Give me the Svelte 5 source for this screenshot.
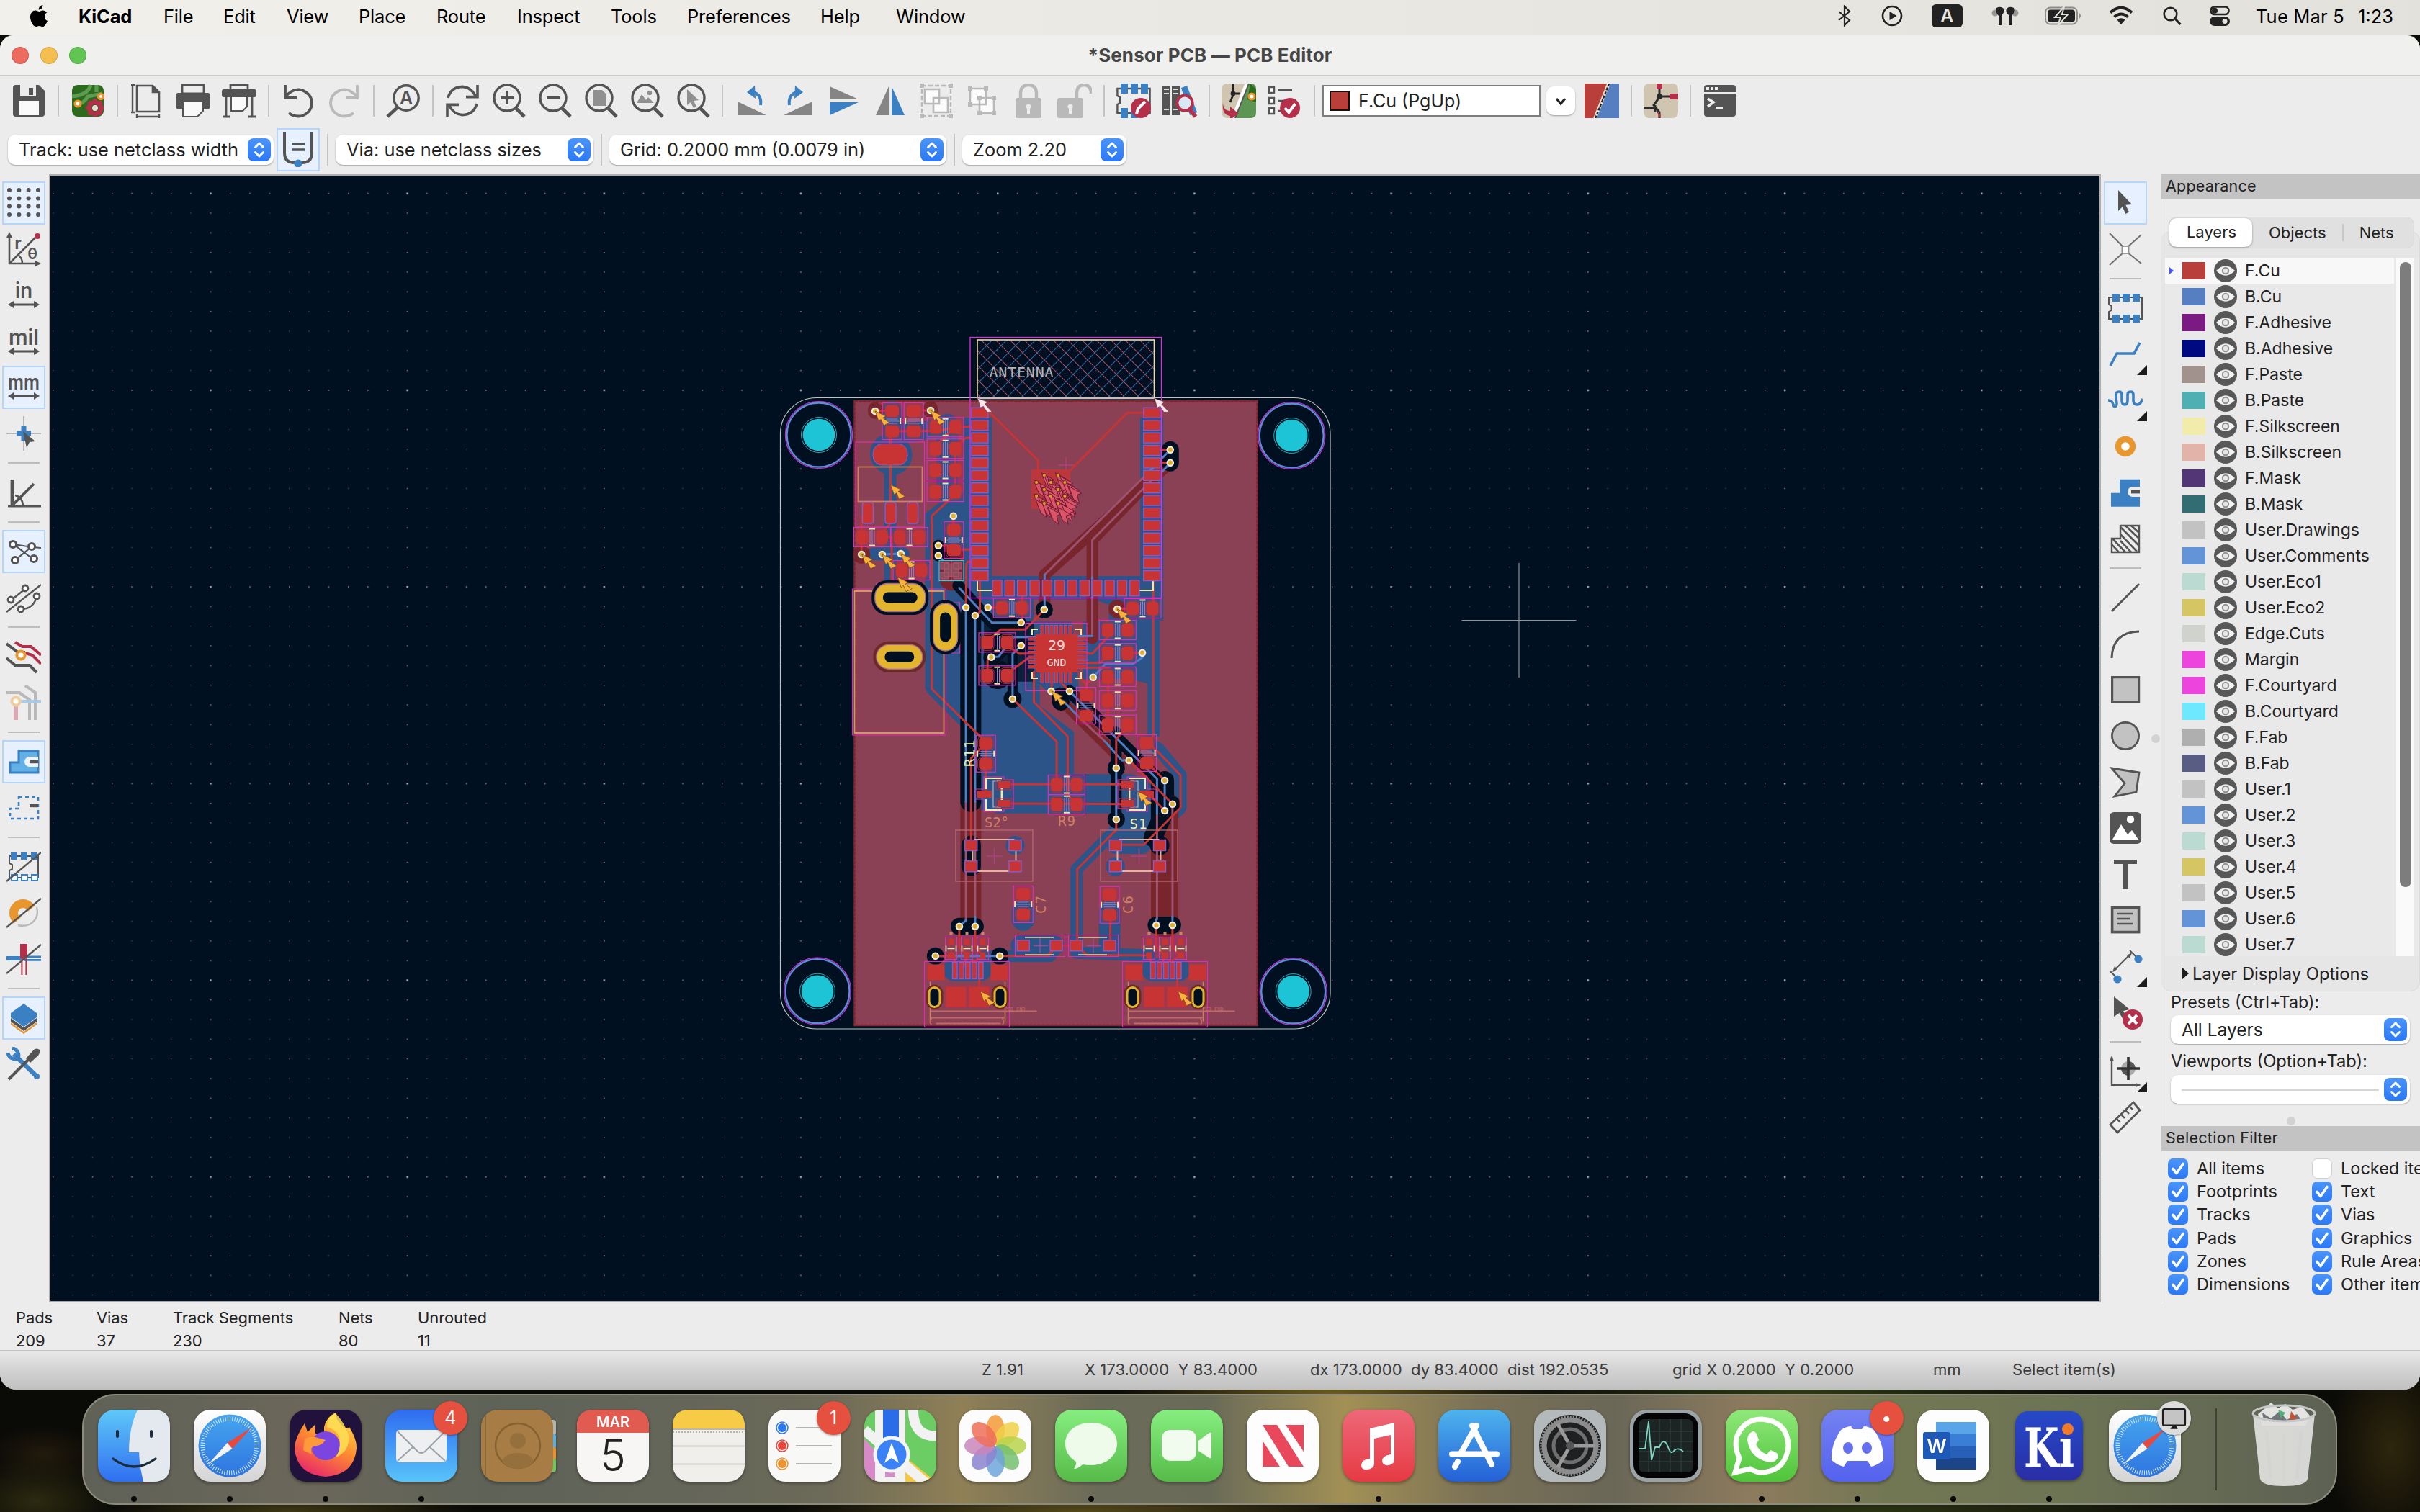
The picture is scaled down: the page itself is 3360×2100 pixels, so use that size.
<script>
  const G = '#545454', B = '#3a80c3', R = '#b4304a', L = '#b9b9b9', O = '#e8962e';

  const word = (s, x, y, size, len) => `<text x="${x}" y="${y}" font-size="${size}" font-weight="600" fill="${G}" text-anchor="middle"${len ? ` textLength="${len}" lengthAdjust="spacingAndGlyphs"` : ''}>${s}</text>`;
  const lens = `<circle cx="11" cy="10" r="9" fill="none" stroke="${G}" stroke-width="1.7"/><path d="M17 17l6 6" stroke="${G}" stroke-width="2.4"/>`;
  const chip = `<path d="M2 4.5h20v15H2v-5l2-1v-3l-2-1z" fill="none" stroke="${G}" stroke-width="1"/>`;
  const icons = {
    save: `<path d="M1 3q0-2 2-2h16l4 4v16q0 2-2 2H3q-2 0-2-2z" fill="${G}"/><path d="M6 1h11v8H6z" fill="#ececec"/><path d="M12 3h3v5h-3z" fill="${G}"/><path d="M5 12h14v10H5z" fill="#fafafa"/>`,
    setup: `<rect x="1" y="1" width="22" height="22" rx="4" fill="#2c6b1d"/><path d="M1 9Q12 8 14 1M4 15Q9 14 12 9L22 7M18 1v5" fill="none" stroke="#5d9b52" stroke-width="2.6"/><circle cx="5" cy="14" r="2" fill="#fff" stroke="${O}" stroke-width="1.6"/><circle cx="21" cy="9" r="1.8" fill="#fff" stroke="${O}" stroke-width="1.6"/><circle cx="17" cy="17" r="4" fill="none" stroke="${R}" stroke-width="3"/><g stroke="${R}" stroke-width="2.5"><path d="M17 10.500v3M17 20v3M10.500 17h3M20 17h3M12.500 12.500l2 2M19.500 19.500l2 2M12.500 21.500l2-2M19.500 14.500l2-2"/></g><circle cx="17" cy="17" r="2" fill="#e8e0d8"/>`,
    page: `<path d="M5 1.500h11l4.500 4.500v13.500H5zM16 1.500V6h4.500" fill="none" stroke="${G}" stroke-width="1.300"/><path d="M16 1.500L20.500 6H16z" fill="${G}"/><path d="M2 1v19M1 1h2.500M1 20h2.500M5 23h15.500M5 21.500v3M20.500 21.500v3" stroke="${G}" stroke-width="1.200" fill="none"/>`,
    print: `<path d="M4.500 1h15v6h-15z" fill="none" stroke="${G}" stroke-width="1.400"/><rect y="6.500" width="24" height="11" rx="1.800" fill="${G}"/><path d="M5 12.500h14V19l-4 4H5z" fill="#fafafa" stroke="${G}"/>`,
    plot: `<path d="M6 1h12v4H6z" fill="none" stroke="${G}" stroke-width="1.400"/><rect y="4" width="24" height="5.500" rx="1.500" fill="${G}"/><path d="M3 9v14M21 9v14M0.500 23h5M18.500 23h5" stroke="${G}" stroke-width="1.400"/><path d="M6.500 9h11v7l-3 3h-8z" fill="#fafafa" stroke="${G}"/>`,
    undo: `<path d="M3 1v9h8M3 9.500Q8 3 14.500 4.500 21 7 21.500 13q0 7-7 9.500-5 1-9-2" fill="none" stroke="${G}" stroke-width="1.900"/>`,
    redo: `<path d="M21 1v9h-8M21 9.500Q16 3 9.500 4.500 3 7 2.500 13q0 7 7 9.500 5 1 9-2" fill="none" stroke="${L}" stroke-width="1.900"/>`,
    find: `<circle cx="14" cy="10" r="8.600" fill="none" stroke="${G}" stroke-width="1.700"/><path d="M8 16.500l-7 6.500" stroke="${G}" stroke-width="2.400"/>${word('A', 14, 14.5, 12.5)}`,
    refresh: `<path d="M2 10Q4 2.500 12 2.200 18 2.500 21 8.500M22.500 1v8.300h-8M22 14Q20 21.500 12 21.800 6 21.500 3 15.500M1.500 23v-8.300h8" fill="none" stroke="${G}" stroke-width="1.800"/>`,
    zin: lens + `<path d="M6.500 10h9M11 5.500v9" stroke="${G}" stroke-width="2"/>`,
    zout: lens + `<path d="M6.500 10h9" stroke="${G}" stroke-width="2"/>`,
    zfit: lens + `<path d="M7 4.500h6l2.500 2.500v8.500H7z" fill="#909090"/>`,
    zobj: lens + `<path d="M5 13.500l3.500-6 3 4 1.500-2 4 4z" fill="#909090"/><circle cx="14" cy="6.500" r="1.600" fill="#909090"/>`,
    zsel: lens + `<path d="M8 4l8 7.500-3.500.5 2 4-2 1-2-4L8 15z" fill="#909090"/>`,
    rotl: `<path d="M2 12.500V22h20z" fill="#858585"/><path d="M18 15Q19 7.500 12.500 6" fill="none" stroke="${B}" stroke-width="2"/><path d="M14 1.500L8.500 6l6 4.500z" fill="${B}"/>`,
    rotr: `<path d="M22 12.500V22H2z" fill="#858585"/><path d="M6 15Q5 7.500 11.500 6" fill="none" stroke="${B}" stroke-width="2"/><path d="M10 1.500L15.500 6l-6 4.500z" fill="${B}"/>`,
    flip: `<path d="M2 2v9h20z" fill="#858585"/><path d="M2 22v-9h20z" fill="${B}"/>`,
    mirror: `<path d="M2 22h9V2z" fill="#858585"/><path d="M22 22h-9V2z" fill="${B}"/>`,
    group: `<path d="M2 1.500h20v21H2z" fill="none" stroke="${L}" stroke-width="1.200" stroke-dasharray="3 1.500"/><path d="M4 4h10v10H4zM10 10h10v10H10z" fill="#fbfbfb" stroke="${L}" stroke-width="1.300"/><path d="M.5 0h3v3h-3zM20.500 0h3v3h-3zM.5 21h3v3h-3zM20.500 21h3v3h-3z" fill="${L}"/>`,
    ungroup: `<path d="M3.500 3.500h11v11h-11zM10 10h10v10.500H10z" fill="#fbfbfb" stroke="${L}" stroke-width="1.300"/><path d="M2 2h3v3H2zM13 2h3v3h-3zM2 13h3v3H2zM8.500 8.500h3v3h-3zM18.500 8.500h3v3h-3zM8.500 19h3v3h-3zM18.500 19h3v3h-3z" fill="${L}"/>`,
    lock: `<path d="M6.500 11V7q0-6 5.500-6t5.500 6v4" fill="none" stroke="${L}" stroke-width="2.200"/><rect x="3" y="10" width="18" height="14" rx="1.600" fill="${L}"/><path d="M12 14.500a1.500 1.500 0 011 2.800v3.700h-2v-3.700a1.500 1.500 0 011-2.800z" fill="#ececec"/>`,
    unlock: `<path d="M13.500 11V7q0-6 5-6t5 6" fill="none" stroke="${L}" stroke-width="2.200"/><rect x="0" y="10" width="18" height="14" rx="1.600" fill="${L}"/><path d="M9 14.500a1.500 1.500 0 011 2.800v3.700H8v-3.700a1.500 1.500 0 011-2.800z" fill="#ececec"/>`,
    fpedit: `<path d="M.7 3.500h22.600v17H.7v-6l1.800-1v-4L.7 8.500z" fill="none" stroke="${G}" stroke-width="1.200"/><path d="M3 0h5v7H3zM10 0h5v7h-5zM17 0h5v7h-5zM3 17h5v7H3zM10 17h5v7h-5z" fill="${B}"/><circle cx="17" cy="17" r="7" fill="${R}"/><path d="M14 21l1-3.500 5-5" fill="none" stroke="#fff" stroke-width="2"/>`,
    fplib: `<path d="M0 2h5.500v20H0zM6.500 2H12v20H6.500z" fill="${G}"/><path d="M13 3l4-1.500L24 20l-5 2z" fill="${B}"/><path d="M1 4h3.500M7.500 4H11M1 7h3.500M7.500 7H11M1 18h3.500M7.500 18H11" stroke="#ddd" stroke-width="1"/><circle cx="15.500" cy="13.500" r="5.300" fill="#d9e8f5" stroke="${R}" stroke-width="2"/><path d="M19 18l4 5" stroke="${R}" stroke-width="2.800"/>`,
    update: `<rect width="24" height="24" rx="4" fill="#cfc5b0"/><path d="M19 0h1q4 0 4 4v16q0 4-4 4H10z" fill="#5c9554"/><path d="M20 0l4 4v9l-6-2z" fill="#2a6a1c"/><path d="M17.500 0L8 24" stroke="#fff" stroke-width="2.400"/><path d="M19 0L9.500 24" stroke="${G}" stroke-width="1"/><path d="M8 0v8l-2 5M8 7h5" stroke="#222" stroke-width="1.400" fill="none"/><circle cx="8" cy="7" r="1.700" fill="#222"/><circle cx="21" cy="9" r="2" fill="#fff" stroke="${O}" stroke-width="1.500"/><path d="M1 13q0 6 5 6V16l6 5-6 4v-2.500Q0 22 1 13z" fill="${R}"/>`,
    drc: `<path d="M1 2.500h3.500V6.500H1zM1 10h3.500v4H1zM1 17h3.500v4H1z" fill="#fff" stroke="${G}" stroke-width="1.200"/><path d="M7.500 4.500H17M7.500 12H12M7.500 19H9" stroke="${G}" stroke-width="1.300"/><circle cx="15.500" cy="17" r="7" fill="${R}"/><path d="M12 17l2.700 3 4.500-6" fill="none" stroke="#fff" stroke-width="2"/>`,
    pair: `<path d="M0 0h16.500L7 24H0z" fill="#b93f3a"/><path d="M18 0h6v24H8.500z" fill="#557fc1"/><path d="M17 0L7.500 24" stroke="#222" stroke-width="1.400" stroke-dasharray="2 1"/><path d="M16 0L6.500 24" stroke="#f5e9d0" stroke-width=".8"/>`,
    sch: `<rect width="24" height="24" rx="4" fill="#cfc5b0"/><path d="M11 0v9.500L7 15l4 5v4M11 9h8M0 17h8M8 15v5" fill="none" stroke="#2b2b2b" stroke-width="1.500"/><circle cx="11" cy="9" r="2" fill="#2b2b2b"/><path d="M9 0h4v4H9zM18 7h6v4h-6zM9 19l3 3-1 2z" fill="${R}"/>`,
    term: `<path d="M1 3q0-2 2-2h18q2 0 2 2v3H1zM1 7h22v14q0 2-2 2H3q-2 0-2-2z" fill="${G}"/><path d="M2.500 2.500h2v2h-2zM5.500 2.500h2v2h-2zM8.500 2.500h2v2h-2z" fill="#eee"/><path d="M3.500 10.500l4 2.500-4 3M9 17h5" fill="none" stroke="#eee" stroke-width="1.800"/>`,
    auto: `<path d="M2.500 0v14q0 7 7 7h5q7 0 7-7V0" fill="none" stroke="${G}" stroke-width="2"/><path d="M7.500 8h9M7.500 12h9" stroke="${G}" stroke-width="1.800"/><circle cx="12" cy="21.500" r="2.800" fill="${B}"/>`,
    // left rail
    grid: [3, 8.700, 14.300, 20].map((y) => [2, 8.700, 15.300, 22].map((x) => `<circle cx="${x}" cy="${y}" r="1.500" fill="${G}"/>`).join('')).join(''),
    polar: `<path d="M2 2v20h21M2 22L21 3M8 16q3 2 3 6" fill="none" stroke="${G}" stroke-width="1.300"/><circle cx="21.500" cy="3" r="2" fill="${R}"/><path d="M0 4l2-4 2 4zM20 20l4 2-4 2z" fill="${G}"/>${word('r', 8, 12, 12)}${word('θ', 18, 19, 11)}`,
    inch: `<path d="M3 18.500h18" stroke="${G}" stroke-width="1.500"/><path d="M1 18.500l4-2.500v5zM23 18.500l-4-2.500v5z" fill="${G}"/>${word('in', 12, 14, 15.5, 12)}`,
    mil: `<path d="M3 19h18" stroke="${G}" stroke-width="1.500"/><path d="M1 19l4-2.500v5zM23 19l-4-2.500v5z" fill="${G}"/>${word('mil', 12, 14.5, 15, 21)}`,
    mm: `<path d="M3 18h18" stroke="${G}" stroke-width="1.500"/><path d="M1 18l4-2.500v5zM23 18l-4-2.500v5z" fill="${G}"/>${word('mm', 12, 13.500, 14, 22)}`,
    cursor: `<path d="M12 0v24M0 12h24" stroke="${L}" stroke-width="1"/><path d="M12 7v10M7 12h10" stroke="${B}" stroke-width="3.500"/><path d="M11.500 10.500l8.500 7-4 .5-2 4z" fill="${G}"/>`,
    ortho: `<path d="M1 21.500h23" stroke="${G}" stroke-width="1.600"/><path d="M4 22V3" stroke="${G}" stroke-width="2.400"/><path d="M4 21L19 6" stroke="${G}" stroke-width="1.900"/><path d="M6 14q5 1 5.500 7" fill="none" stroke="${G}" stroke-width="1.300"/>`,
    rats: `<path d="M5 7l13 2 6 .5M6 18L17 9M5 7l13 10" stroke="${G}" stroke-width="1.100"/><g fill="#fff" stroke="${G}" stroke-width="1.500"><circle cx="4.500" cy="7" r="2.300"/><circle cx="17.500" cy="8.500" r="2.300"/><circle cx="6" cy="18" r="2.300"/><circle cx="19" cy="17" r="2.300"/></g>`,
    rats2: `<path d="M0 22L24 3M3 14l10-8M10 20q9 0 11-9" stroke="${G}" fill="none" stroke-width="1.200"/><g fill="#fff" stroke="${G}" stroke-width="1.400"><circle cx="3" cy="13.500" r="2"/><circle cx="13" cy="5.500" r="2"/><circle cx="10" cy="20" r="2"/><circle cx="21" cy="11" r="2"/></g>`,
    highlight: `<path d="M0 3l8 6h5M0 13l6 5h10l5 5" fill="none" stroke="${G}" stroke-width="2"/><path d="M6 2l5 3h6l7 6M13 9.500l5 1.500 6 6" fill="none" stroke="${R}" stroke-width="2"/><circle cx="10" cy="11" r="2.800" fill="#fff" stroke="${O}" stroke-width="2"/>`,
    dim: `<path d="M0 5h9l7 5v14M13 0l7 5v19" fill="none" stroke="${L}" stroke-width="2"/><path d="M8 11h16" stroke="#a9cbe8" stroke-width="2"/><path d="M6.500 13v11" stroke="#dba9b4" stroke-width="3"/><circle cx="6.500" cy="11" r="2.800" fill="#fff" stroke="#f2cd9b" stroke-width="2"/>`,
    zonef: `<path d="M8.500 4.500H22v15H2.500v-7h6z" fill="#62b1e6" stroke="${B}" stroke-width="1.500"/><path d="M22 8.500h-6a3.500 3.500 0 000 7h6z" fill="#eef4ff"/><path d="M16 12h6" stroke="${G}" stroke-width="2.200"/>`,
    zoneo: `<path d="M8.500 4.500H22v15H2.500v-7h6z" fill="none" stroke="${B}" stroke-width="1.300" stroke-dasharray="2.500 2"/><path d="M16 10.500h6" stroke="${G}" stroke-width="2.200"/>`,
    padso: `${chip}<path d="M3 2h4.500v5H3zM10 2h4.500v5H10zM17 2h4.500v5H17z" fill="${B}"/><path d="M3.500 17.500h4v4h-4zM10.500 17.500h4v4h-4zM17.500 17.500h4v4h-4z" fill="#fff" stroke="${B}"/><path d="M0 22L24 2" stroke="${G}" stroke-width="1.200"/>`,
    viao: `<circle cx="11.500" cy="12" r="6.500" fill="none" stroke="${O}" stroke-width="6"/><path d="M3 21L22 5q4 16-8 18Q8 24 3 21z" fill="#ececec"/><path d="M21 8q2 8-5 12-4 1.500-8 .5" fill="none" stroke="${L}" stroke-width="1.200"/><path d="M0 22L24 2" stroke="${G}" stroke-width="1.200"/>`,
    tracko: `<path d="M0 11.500h12M12 10.500h12M12 12.700h12" stroke="${B}" stroke-width="1.400"/><path d="M0 11.500h10" stroke="${B}" stroke-width="3"/><path d="M10 2h4v9h-4zM10.700 11v12M13.700 11v12" fill="${R}" stroke="${R}" stroke-width="1"/><path d="M0 22L24 2" stroke="${G}" stroke-width="1.200"/>`,
    layers: `<path d="M3 15l9 6.500L21 15v1.500L12 23l-9-6.500z" fill="${O}"/><path d="M3 12l9 6.500L21 12v2.500L12 21l-9-6.500z" fill="${G}"/><path d="M12 2l9 6.500v3L12 18l-9-6.500v-3z" fill="${B}"/>`,
    tools: `<path d="M5 5l15 14.500" stroke="${B}" stroke-width="3.200"/><path d="M1 4a5 5 0 007 4M4 1a5 5 0 014 7" fill="none" stroke="${B}" stroke-width="2.500"/><circle cx="21" cy="20.500" r="2" fill="${B}"/><path d="M1.500 22.500L15 9" stroke="${G}" stroke-width="2"/><path d="M13.500 8L19 2q2-1.500 4 0 .5 2-1 4l-5.500 5z" fill="${G}"/>`,
    // right rail
    arrow: `<path d="M7 3l9.500 10-4.300.4 2.300 4.800-2.300 1.300-2.300-4.900L7 17.500z" fill="${G}"/>`,
    local: `<path d="M1 1l10 10M23 2L13 11M1 23l10-9M23 22l-10-8" stroke="#707070" stroke-width="1"/><rect x="9.700" y="10" width="4.600" height="5" fill="#fff" stroke="#909090" stroke-width=".8"/>`,
    fp: `<path d="M.5 4.500h23v15H.5v-5l1.800-1v-3L.5 9.500z" fill="none" stroke="${G}" stroke-width="1"/><path d="M3 2h5v5.500H3zM10 2h5v5.500h-5zM17 2h5v5.500h-5zM3 16.500h5V22H3zM10 16.500h5V22h-5zM17 16.500h5V22h-5z" fill="${B}"/>`,
    route: `<path d="M1.500 20L6 11.500h12L22 4" fill="none" stroke="${B}" stroke-width="1.800"/>`,
    tune: `<path d="M0 12q3 0 3.500 3 .5 2 2 1 1-1 0-5V8q0-2 2-2t2 2v4q0 3 2 3t2-3V8q0-2 2-2t2 2v4q0 3 2.500 3T24 11" fill="none" stroke="${B}" stroke-width="1.800"/>`,
    via: `<circle cx="12" cy="12" r="5" fill="#fff" stroke="${O}" stroke-width="4.200"/>`,
    zone: `<path d="M8 2h14v20H2V12h6z" fill="${B}" transform="translate(0 1) scale(1 .95)"/><path d="M22 8h-5a3.500 3.500 0 000 7h5z" fill="#ececec"/><path d="M16 11.500h6" stroke="${G}" stroke-width="2.400"/>`,
    rule: `<path d="M8.500 3H21.500v18.500H2.500V12h6z" fill="none" stroke="${G}" stroke-width="1.200"/><path d="M8.500 4L21.500 17M12 3l9.500 9M16 3l5.500 5M8.500 9L20 21M3 12l9 9.500M8.500 13.500l7.500 8M2.500 16l5 5.500" stroke="${G}" stroke-width="1.300"/>`,
    line: `<path d="M2.500 21.500l19-19" stroke="${G}" stroke-width="1.500"/>`,
    arc: `<path d="M2.500 22Q3 4 21.500 3.500" fill="none" stroke="${G}" stroke-width="1.500"/>`,
    rect: `<rect x="2.800" y="3.300" width="18.500" height="17" fill="#c2c2c2" stroke="${G}" stroke-width="1.600"/>`,
    circ: `<circle cx="12" cy="12" r="9.300" fill="#c2c2c2" stroke="${G}" stroke-width="1.400"/>`,
    poly: `<path d="M2.500 2.500l19 3-2 13.500-15 3 7-9z" fill="#c2c2c2" stroke="${G}" stroke-width="1.400"/>`,
    img: `<rect x="1" y="1" width="22" height="22" rx="3" fill="${G}"/><path d="M3 20L9 9.500l4.500 7 3-3 4.500 6.500z" fill="#fff"/><circle cx="15.500" cy="6" r="2.600" fill="#fff"/>`,
    text: `<rect x="4" y="2" width="16" height="3" fill="${G}"/><rect x="10" y="3" width="4" height="19.500" fill="${G}"/>`,
    tbox: `<rect x="2.800" y="3.300" width="18.500" height="17" fill="#c2c2c2" stroke="${G}" stroke-width="1.800"/><path d="M6 7.500h11.500M6 11h9M6 14.500h11.500" stroke="${G}" stroke-width="1.300"/>`,
    dimn: `<path d="M1 15l5 5M3.500 15.500L16 3M15 1l6 6" stroke="${G}" stroke-width="1"/><path d="M3 16l1.500-4 2 2zM16.500 2.500l-1.500 4-2-2z" fill="${G}"/><circle cx="6.500" cy="21" r="2.800" fill="${B}"/><circle cx="21" cy="7" r="2.800" fill="${B}"/>`,
    del: `<path d="M4 1l11 9-4.500 1 2.500 4-2.500 2-2.700-4.500L4 15z" fill="${G}"/><circle cx="17" cy="17" r="7" fill="${R}"/><path d="M14 14l6 6M20 14l-6 6" stroke="#fff" stroke-width="2"/>`,
    origin: `<path d="M2.500 2v19.500H21" fill="none" stroke="${G}" stroke-width="1.200"/><path d="M1 5l1.500-4L4 5zM19 20l4 1.500-4 1.500z" fill="${G}"/><circle cx="14" cy="10" r="5" fill="#aaa"/><path d="M14 10V5a5 5 0 015 5h-5v5a5 5 0 01-5-5z" fill="${G}"/><path d="M14 2v16M6 10h16" stroke="#333" stroke-width="1.800"/>`,
    ruler: `<path d="M1.500 17L17.500 1.500 22 7 6.500 22.500z" fill="none" stroke="${G}" stroke-width="1.400"/><path d="M6 13l2.500 2.500M9 10l2.500 2.500M12 7l2.500 2.500M15 4.500l2 2" stroke="${G}" stroke-width="1.200"/>`
  };

  const topBar = ['save', '|', 'setup', '|', 'page', 'print', 'plot', '|', 'undo', 'redo', '|', 'find', '|', 'refresh', 'zin', 'zout', 'zfit', 'zobj', 'zsel', '|',
    'rotl', 'rotr', 'flip', 'mirror', 'group', 'ungroup', 'lock', 'unlock', '|', 'fpedit', 'fplib', '|', 'update', 'drc', '|'];
  const leftBar = ['grid', 'polar', 'inch', 'mil', 'mm', 'cursor', '|', 'ortho', '|', 'rats', 'rats2', '|', 'highlight', 'dim', '|', 'zonef', 'zoneo', '|', 'padso', 'viao', 'tracko', '|', 'layers', 'tools'];
  const rightBar = ['arrow', 'local', '|', 'fp', 'route', 'tune', 'via', 'zone', 'rule', '|', 'line', 'arc', 'rect', 'circ', 'poly', 'img', 'text', 'tbox', 'dimn', 'del', '|', 'origin', 'ruler'];
  const active = ['grid', 'mm', 'rats', 'zonef', 'layers', 'arrow', 'auto'];
  const more = ['route', 'tune', 'dimn', 'origin'];

  const menus = [['KiCad', 118], ['File', 83], ['Edit', 88], ['View', 100], ['Place', 108], ['Route', 112], ['Inspect', 130], ['Tools', 106], ['Preferences', 185], ['Help', 105], ['Window', 120]];

  const layers = [['F.Cu', '#b93f3a'], ['B.Cu', '#557fc1'], ['F.Adhesive', '#7b1a80'], ['B.Adhesive', '#000a80'], ['F.Paste', '#a2928e'], ['B.Paste', '#4eb0b3'], ['F.Silkscreen', '#f1ecaa'],
    ['B.Silkscreen', '#e1b3a9'], ['F.Mask', '#523675'], ['B.Mask', '#316d73'], ['User.Drawings', '#c2c2c2'], ['User.Comments', '#6394d8'], ['User.Eco1', '#bbdad1'], ['User.Eco2', '#d6c663'],
    ['Edge.Cuts', '#d0d2cd'], ['Margin', '#ec44dc'], ['F.Courtyard', '#ec44dc'], ['B.Courtyard', '#6de8ff'], ['F.Fab', '#afafaf'], ['B.Fab', '#595d84'], ['User.1', '#c2c2c2'], ['User.2', '#6394d8'],
    ['User.3', '#bbdad1'], ['User.4', '#d6c663'], ['User.5', '#c2c2c2'], ['User.6', '#6394d8'], ['User.7', '#bbdad1']];
  const filters = [['All items', 'Locked items'], ['Footprints', 'Text'], ['Tracks', 'Vias'], ['Pads', 'Graphics'], ['Zones', 'Rule Areas'], ['Dimensions', 'Other items']];
  const counts = [['Pads', 209, 112], ['Vias', 37, 106], ['Track Segments', 230, 230], ['Nets', 80, 110], ['Unrouted', 11, 120]];

  // Board geometry. Horizontal units are 1/1.96 px and vertical units 1/3 px.
  const X = (u) => +(u / 1.96).toFixed(1);
  const Y = (v) => +(v / 3).toFixed(1);
  const pts = (s, dv = 0) => s.split(' ').map((p) => { const [u, v] = p.split(',').map(Number); return `${X(u)},${Y(v + dv)}`; }).join(' ');
  const low = (s) => pts(s, 1440);

  const bluePolys = [
    pts('545,390 622,390 622,1050 1025,1050 1025,390 1088,390 1088,1235 560,1235 560,1180 440,1100 440,790 500,720 545,700'),
    pts('440,1080 540,1160 600,1180 840,1235 870,1700 845,1720 845,1875 1030,1890 1030,2025 592,2025 592,1700 535,1650 440,1520'),
    pts('1045,1050 1078,1050 1078,1720 1045,1720'),
    pts('870,1235 1050,1235 1050,1500 1000,1480 870,1480'),
    pts('1000,1880 1070,1900 1140,2010 1020,2200 940,2190 950,1900')
  ];
  // remaining front copper inside the blue areas
  const redPolys = [pts('735,1148 900,1148 940,1170 940,1240 735,1240'), pts('752,1500 790,1560 945,1790 945,1860 845,1860 845,1700 752,1590')];
  const blueBands = [
    [pts('345,480 345,1100'), 17], [pts('345,540 350,546'), 56], [pts('350,360 350,450 409,450 500,430'), 26], [pts('500,420 500,700'), 30], [pts('517,800 517,950'), 34], [pts('300,958 380,958'), 18],
    [low('960,640 960,665 852,832 852,1180 1050,1190'), 17], [low('642,475 1000,475 1000,560 640,560'), 26], [low('1043,300 1075,330 1135,440 1135,575 1035,732'), 17],
    [low('685,732 685,733'), 26], [low('958,732 1030,732'), 24], [low('958,820 958,821'), 26], [low('707,1010 707,1040'), 32], [low('942,1010 942,1160'), 30],
    [low('600,1195 780,1195 800,1155'), 16], [low('700,1150 790,1150'), 28], [low('520,1250 590,1250'), 32], [low('1060,1250 1130,1250'), 32], [low('605,300 605,400'), 28], [low('458,80 590,285'), 16]
  ];
  const darkRed = [
    [pts('1107,578 765,1045 765,1160'), 16], [pts('1060,640 895,900 895,1310'), 16], [low('564,560 564,1060'), 29], [low('1092,560 1092,1060'), 38], [low('815,135 975,378'), 15], [pts('304,355 304,365'), 20], [pts('455,350 455,362'), 20],
    [pts('267,960 267,962'), 24], [pts('963,1185 963,1190'), 24], [pts('512,970 512,1060'), 34]
  ];
  const dark = [
    [pts('564,1215 564,1990'), 29], [pts('1107,524 1107,578'), 24], [pts('476,923 476,965 520,985'), 16], [pts('764,1190 764,1191'), 24], [pts('530,1090 622,1245 700,1245'), 16],
    [pts('620,1388 660,1340 700,1340'), 22], [pts('678,1370 678,1562'), 14], [pts('636,1330 638,1332'), 40], [pts('636,1460 637,1461'), 40], [low('678,122 678,123'), 25],
    [low('808,110 809,135'), 24], [low('833,90 1071,450 1071,700'), 17], [low('960,260 960,624'), 15], [low('960,410 960,411'), 24], [low('960,624 960,625'), 24],
    [low('1092,462 1092,590 1060,700'), 26], [low('1113,560 1113,561'), 22], [low('565,732 565,820'), 27], [low('1078,732 1078,733'), 27], [low('533,1070 576,1070'), 24],
    [low('468,1193 468,1194'), 24], [low('643,1193 643,1194'), 24], [low('1069,1065 1113,1065'), 24]
  ];
  const blueTraces = [
    pts('1107,524 1040,630'), pts('1107,578 1085,615'), pts('765,1045 765,1190'), pts('895,1055 895,1140'), pts('895,1300 680,1305'), pts('533,1100 622,1244 701,1244'), pts('476,965 533,1055'),
    pts('551,1181 551,1990'), pts('576,1215 576,1990'), pts('620,1388 640,1386 680,1305'), pts('701,1340 678,1375 678,1562'), low('833,90 1071,455 1071,600'), low('815,130 870,215'), low('930,300 975,378 995,378'),
    low('960,410 960,624'), low('1092,462 1092,588'), low('533,1070 551,1045'), low('576,1070 576,1030'), low('468,1193 643,1193'), low('1069,1065 1069,1040'), low('1113,1065 1113,1030'), pts('1031,1370 1031,1390 1005,1417 930,1417 897,1472'), pts('323,960 374,957')
  ];
  const mauveTraces = [pts('1040,630 765,1045'), pts('1060,645 895,900 895,1300'), low('551,550 551,1045'), low('576,550 576,1040'), low('1071,600 1071,1040'), low('1113,560 1113,1030'), low('870,215 930,300')];
  const redTraces = [
    pts('600,345 747,568 747,610'), pts('1057,370 990,370 835,610'), pts('346,450 346,790'), pts('350,447 480,445 520,430 589,427'), pts('304,363 350,360'), pts('409,360 455,360'), pts('522,430 480,490 470,520'),
    pts('522,520 522,699'), pts('522,520 550,475 589,475'), pts('522,710 458,800 458,1520 592,1722'), pts('517,800 517,860'), pts('476,923 518,925'), pts('518,940 589,940'), pts('267,800 267,960'), pts('397,830 420,820'),
    pts('346,830 318,880 349,890 349,1100'), pts('589,995 555,990 552,1010 551,1181'), pts('589,1048 589,1200 576,1215'), pts('611,1181 650,1183'), pts('704,1100 704,1244'), pts('764,1190 713,1273 645,1273 620,1310'),
    pts('1107,524 1057,524'), pts('1107,578 1057,578'), pts('963,1188 1010,1185'), pts('660,1340 697,1373 740,1373'), pts('660,1460 720,1393'), pts('860,1373 895,1373 940,1300'), pts('860,1412 915,1412 940,1380'),
    pts('860,1432 940,1432'), pts('990,1372 1031,1370'), pts('1061,1050 1061,1720'), pts('620,1388 610,1400 610,1440'), pts('736,1450 736,1575 828,1718 828,1960 850,2000'), pts('938,1470 938,1660'),
    low('678,122 798,300 798,470'), low('783,90 785,50'), low('833,90 810,55'), low('860,30 878,60 897,33'), low('878,60 878,110'), low('605,300 605,510'), low('590,330 565,370 565,732'), low('642,478 985,478'), low('642,558 985,560'),
    low('990,235 960,290 960,410'), low('995,378 1113,560'), low('1043,385 1092,462'), low('1050,520 1092,588'), low('1043,300 1075,345 1135,440 1135,575 1035,730 958,730'), low('960,624 960,668 854,832 854,1150 880,1190 1050,1190 1060,1250'),
    low('944,1020 944,1150'), low('795,1150 850,1150'), low('533,1070 533,1155 555,1190 540,1250'), low('576,1070 576,1155 600,1200 560,1220 555,1280'), low('468,1193 520,1193 520,1250'), low('643,1193 772,1193 795,1160'),
    low('587,1240 587,1340'), low('1069,1065 1069,1155 1092,1190 1080,1250'), low('1113,1065 1113,1155 1135,1195 1098,1220 1095,1280'), low('1126,1250 1126,1340')
  ];
  const hParts = [[495, 430], [495, 520], [495, 609], [495, 699], [296, 888], [397, 888], [403, 1026], [676, 1183], [1032, 1185], [636, 1327], [964, 1275], [964, 1372], [636, 1465], [964, 1470], [964, 1568], [964, 1670], [825, 1920], [825, 2002]];
  const vParts = [[350, 405], [409, 405], [518, 900], [878, 1590], [605, 1790], [1043, 1788], [707, 2418], [942, 2420]];
  const range = (n) => Array.from({ length: n }, (_, i) => i);
  const modPads = [...range(14).map((i) => [589, 370 + 52.2 * i]), ...range(14).map((i) => [1057, 370 + 52.2 * i])];
  const footPads = range(12).map((i) => [636 + 34 * i, 1100]);
  const squarePads = [[565, 2172], [685, 2172], [565, 2260], [685, 2260], [958, 2172], [1078, 2172], [958, 2260], [1078, 2260], [707, 2590], [797, 2590], [851, 2590], [942, 2590]];
  const vias = [[304, 363], [455, 360], [517, 800], [476, 923], [476, 965], [267, 960], [323, 960], [374, 957], [551, 1181], [576, 1215], [611, 1181], [701, 1244], [764, 1190], [1107, 524], [1107, 578], [963, 1188],
    [701, 1340], [620, 1388], [1031, 1370], [897, 1472], [678, 1562], [783, 1530], [833, 1530], [995, 1818], [960, 1850], [1092, 1902], [1113, 2000], [1092, 2028], [960, 2064], [533, 2510], [576, 2510], [468, 2633], [643, 2633], [1069, 2505], [1113, 2505]];
  const arrows = [[304, 363], [455, 360], [346, 670], [268, 960], [323, 960], [374, 957], [365, 1055], [963, 1188], [785, 1530], [1018, 1947], [590, 2780], [1128, 2780]];
  const thermalVias = [[764, 630], [802, 630], [743, 660], [782, 660], [820, 660], [764, 690], [802, 690], [743, 717], [782, 717], [820, 717], [764, 747], [802, 747]];
  const thermals = thermalVias.flatMap(([u, v], i) => [[u, v + 8], [u + 9 + (i % 3) * 4, v + 22], [u + 18 - (i % 2) * 12, v + 34]]);
  const holes = [[151, 462], [1437, 465], [147, 2780], [1442, 2781]];
  const usb = [438, 977];

  const sq = (c, inner) => `<rect width="100" height="100" rx="23" fill="${c}"/>${inner}`;
  const safari = sq('url(#paper)', `<circle cx="50" cy="50" r="43.500" fill="url(#sky)"/><circle cx="50" cy="50" r="37.500" fill="none" stroke="#d5e9fb" stroke-width="6" stroke-dasharray="1 2.270"/><path d="M80 25L46.500 46l7 8z" fill="#e8493d"/><path d="M20 76l26.500-30 7 8z" fill="#f4f4f4"/>`);
  const petals = ['#f39a36', '#f0d048', '#b9d34c', '#74bf6f', '#6fa4dc', '#8b83cf', '#c985bb', '#ee6f57'];
  const dock = [
    { n: 'Finder', run: 1, s: sq('url(#finder)', `<path d="M55 0h22q23 0 23 23v54q0 23-23 23H63Q58 80 57 59H43Q43 25 55 0z" fill="#e4e9f0"/><path d="M27 30v7M74 30v7" stroke="#1e2b3a" stroke-width="4" stroke-linecap="round"/><path d="M21 68Q50 90 80 68" fill="none" stroke="#1e2b3a" stroke-width="3.200" stroke-linecap="round"/>`) },
    { n: 'Safari', run: 1, s: safari },
    { n: 'Firefox', run: 1, s: sq('#20123a', `<path d="M21 19l4 12 10-10 1 12q6 4 12 4V24Q51 10 64 4q0 10 9 18 5 7 10 2 11 18 10 30-3 36-43 39Q10 90 7 54q0-14 14-35z" fill="url(#fox)"/><circle cx="50" cy="50" r="20" fill="#7b45e0"/><path d="M21 40q10-4 18-1l11 3q-6 8-13 8-10 1-6 12l-12-6z" fill="#ff9a38"/><path d="M52 24q16 4 18 20 0 14-6 22 20-8 18-30Q78 20 64 5 52 10 52 24z" fill="#ffdf55" opacity=".85"/>`) },
    { n: 'Mail', run: 1, badge: '4', s: sq('url(#mail)', `<rect x="15" y="28" width="70" height="45" rx="5" fill="#eeeff1"/><path d="M17 30l28 28q5 4 10 0l28-28M17 71l22-20M83 71L61 51" fill="none" stroke="#9aa0a8" stroke-width="2"/>`) },
    { n: 'Contacts', s: `<rect x="84" y="14" width="20" height="22" rx="4" fill="#b5b5b0"/><rect x="84" y="34" width="20" height="20" rx="3" fill="#5aaee0"/><rect x="84" y="52" width="20" height="18" rx="3" fill="#e8912e"/><rect x="84" y="68" width="20" height="18" rx="3" fill="#6cc75c"/>` + sq('#a87c45', `<path d="M6 8v84" stroke="#8d6636" stroke-width="2"/><circle cx="51" cy="50" r="31" fill="none" stroke="#86612f" stroke-width="2.500"/><circle cx="51" cy="43" r="11" fill="#95703c"/><path d="M29 72q4-12 22-12t22 12q-8 10-22 10t-22-10z" fill="#95703c"/>`) },
    { n: 'Calendar', s: sq('#f7f6f5', `<path d="M0 32V23Q0 0 23 0h54q23 0 23 23v9z" fill="#e25b50"/><text x="50" y="24" font-size="20" font-weight="600" fill="#fff" text-anchor="middle">MAR</text><text x="50" y="85" font-size="60" font-weight="300" fill="#222" text-anchor="middle">5</text>`) },
    { n: 'Notes', s: sq('#f1efeb', `<path d="M0 26V23Q0 0 23 0h54q23 0 23 23v3z" fill="#f7cb46"/><path d="M0 27h100" stroke="#a9a498" stroke-width="1.500"/><path d="M0 31h100" stroke="#b9b4a8" stroke-width="2" stroke-dasharray="2 2"/><path d="M0 50.500h100M0 75.500h100" stroke="#cfccc6" stroke-width="2"/>`) },
    { n: 'Reminders', badge: '1', s: sq('#f8f8f7', ['#2c77f0', '#e8453c', '#ef9530'].map((c, i) => `<circle cx="19" cy="${25 + i * 25}" r="6" fill="${c}"/><circle cx="19" cy="${25 + i * 25}" r="8" fill="none" stroke="${c}" stroke-width="1.500"/><path d="M38 ${25 + i * 25}h50" stroke="#b3b3b3" stroke-width="2"/>`).join('')) },
    { n: 'Maps', s: `<clipPath id="mc"><rect width="100" height="100" rx="23"/></clipPath><g clip-path="url(#mc)"><path d="M0 0h100v100H0z" fill="#6bcd63"/><path d="M0 40l55 60H0z" fill="#d889c8"/><path d="M50 60l50 40H54z" fill="#f5c945"/><path d="M0 28L95 110M22 0v100h28V0M68 0q0 40 36 36" stroke="#f2f2f2" stroke-width="14" fill="none"/><path d="M26 0h22v50H26z" fill="#2b6de8"/></g><circle cx="38" cy="62" r="23" fill="#3b82f6" stroke="#f4f6fa" stroke-width="5"/><path d="M38 46l10 28-10-7-10 7z" fill="#fff"/>` },
    { n: 'Photos', s: sq('#fcfcfc', petals.map((c, i) => `<ellipse cx="50" cy="28" rx="13" ry="21" fill="${c}" opacity=".85" transform="rotate(${i * 45} 50 50)"/>`).join('')) },
    { n: 'Messages', run: 1, s: sq('url(#green)', `<path d="M50 18c22 0 36 13 36 29S72 77 50 77q-7 0-12-1-6 6-12 6 4-6 3-10Q14 63 14 47c0-16 14-29 36-29z" fill="#eefbea"/>`) },
    { n: 'FaceTime', s: sq('url(#green)', `<rect x="15" y="28" width="48" height="43" rx="12" fill="#f1fbee"/><path d="M66 43l15-11q3-1 3 2v31q0 3-3 2L66 57z" fill="#f1fbee"/>`) },
    { n: 'News', s: sq('#fdfdfd', `<path d="M22 21h20l37 58H58zM54 21h25v37zM22 43v36h24z" fill="#e8475c"/>`) },
    { n: 'Music', run: 1, s: sq('url(#music)', `<path d="M38 26l34-8v50q0 8-8 9t-9-6q0-7 12-9V35l-23 5v34q0 8-9 9t-9-6q0-8 12-9z" fill="#fff"/>`) },
    { n: 'App Store', s: sq('url(#store)', `<path d="M53 22L32 59M47 22l27 54M27 72l-4 7" stroke="#fff" stroke-width="8" stroke-linecap="round"/><path d="M19 61.500h62" stroke="#fff" stroke-width="8" stroke-linecap="round"/>`) },
    { n: 'System Settings', s: sq('#b4b9bb', `<circle cx="50" cy="50" r="43" fill="#1f2022"/><circle cx="50" cy="50" r="36" fill="none" stroke="#8c8c8c" stroke-width="7"/><circle cx="50" cy="50" r="40" fill="none" stroke="#8c8c8c" stroke-width="4" stroke-dasharray="2 2"/><circle cx="50" cy="50" r="23" fill="none" stroke="#6f6f6f" stroke-width="5"/><path d="M50 50h34M50 50L33 20M50 50L33 80" stroke="#9a9a9a" stroke-width="5"/><circle cx="50" cy="50" r="6" fill="#555"/>`) },
    { n: 'Activity Monitor', s: sq('#9ba3a6', `<rect x="5" y="5" width="90" height="90" rx="19" fill="#050505"/><rect x="12" y="13" width="76" height="74" rx="8" fill="#1c2524"/><path d="M12 30h76M12 44h76M12 58h76M12 72h76M26 13v74M41 13v74M56 13v74M71 13v74" stroke="#34443f"/><path d="M12 54h9l5-38 4 54 5-18h6q6-16 12 0 4 12 9 4 6-4 12 2" fill="none" stroke="#7fd6c3" stroke-width="1.800"/>`) },
    { n: 'WhatsApp', run: 1, s: sq('url(#wa)', `<path d="M13 87l6-20Q11 50 16 36 26 13 50 13q36 3 37 37-3 35-37 37-8 0-16-5z" fill="none" stroke="#fff" stroke-width="7"/><path d="M36 31q4-3 7 3l3 8-4 6q5 10 15 14l5-6q12 4 11 8-2 9-12 9Q34 68 30 42q0-8 6-11z" fill="#fff"/>`) },
    { n: 'Discord', run: 1, badge: '•', s: sq('url(#discord)', `<path d="M27 28q8-5 14-5l3 4h12l3-4q6 0 14 5 14 20 13 42-10 8-17 9l-5-8H36l-5 8q-7-1-17-9-1-22 13-42z" fill="#fff"/><ellipse cx="37" cy="53" rx="7" ry="8" fill="#6470f0"/><ellipse cx="63" cy="53" rx="7" ry="8" fill="#6470f0"/>`) },
    { n: 'Word', run: 1, s: sq('#fdfdfd', `<path d="M26 17h56v17H26z" fill="#5aa5e8"/><path d="M26 34h56v17H26z" fill="#3a7fd5"/><path d="M26 51h56v16H26z" fill="#2860b8"/><path d="M26 67h56v16H26z" fill="#1c4489"/><rect x="8" y="31" width="38" height="38" rx="3" fill="#1f59b8"/><text x="27" y="60" font-size="27" font-weight="600" fill="#fff" text-anchor="middle">W</text>`) },
    { n: 'KiCad', run: 1, s: `<rect x="3" y="2" width="94" height="96" rx="18" fill="url(#ki)"/><text x="15" y="78.500" font-size="75" font-weight="700" font-family="DejaVu Serif, Liberation Serif, serif" fill="#fff" textLength="70" lengthAdjust="spacingAndGlyphs">Kı</text><circle cx="76" cy="27" r="8" fill="#f07a28"/>` },
    { n: 'Safari window', desk: 1, s: safari }
  ];
</script>

{#snippet tools(list)}
  {#each list as t}
    {#if t === '|'}<i class="sep"></i>
    {:else}
      <button class="tool" class:on={active.includes(t)} class:more={more.includes(t)} aria-label={t}>
        <svg viewBox="0 0 24 24">{@html icons[t]}</svg>
      </button>
    {/if}
  {/each}
{/snippet}

{#snippet knob()}
  <svg class="knob" viewBox="0 0 32 32"><rect width="32" height="32" rx="8" fill="url(#knob)" /><path d="M10.500 12.500L16 7l5.500 5.500M10.500 19.500L16 25l5.500-5.500" fill="none" stroke="#fff" stroke-width="3" stroke-linecap="round" stroke-linejoin="round" /></svg>
{/snippet}

{#snippet check(on)}
  <svg class="check" viewBox="0 0 28 28">
    {#if on}<rect width="28" height="28" rx="7" fill="url(#knob)" /><path d="M7 14.500l5 6 9-13" fill="none" stroke="#fff" stroke-width="3.600" stroke-linecap="round" stroke-linejoin="round" />
    {:else}<rect x=".5" y=".5" width="27" height="27" rx="7" fill="#fff" stroke="#cfcfcf" />{/if}
  </svg>
{/snippet}

<div class="screen">
  <svg class="defs" aria-hidden="true">
    <defs>
      <linearGradient id="knob" x2="0" y2="1"><stop stop-color="#4a94fa" /><stop offset="1" stop-color="#2a78f6" /></linearGradient>
      <linearGradient id="finder" x2="0" y2="1"><stop stop-color="#5fc8f8" /><stop offset="1" stop-color="#2f6ff0" /></linearGradient>
      <linearGradient id="paper" x2="0" y2="1"><stop stop-color="#ffffff" /><stop offset="1" stop-color="#d4d4d4" /></linearGradient>
      <linearGradient id="sky" x2="0" y2="1"><stop stop-color="#46a5ee" /><stop offset="1" stop-color="#2e74e0" /></linearGradient>
      <linearGradient id="fox" x1=".8" x2=".3" y2="1"><stop stop-color="#ffe24a" /><stop offset=".5" stop-color="#ff8a30" /><stop offset="1" stop-color="#e8286a" /></linearGradient>
      <linearGradient id="mail" x2="0" y2="1"><stop stop-color="#2f6cf0" /><stop offset="1" stop-color="#58c4f9" /></linearGradient>
      <linearGradient id="green" x2="0" y2="1"><stop stop-color="#86ee80" /><stop offset="1" stop-color="#56bb48" /></linearGradient>
      <linearGradient id="wa" x2="0" y2="1"><stop stop-color="#8fe87a" /><stop offset="1" stop-color="#4fc43a" /></linearGradient>
      <linearGradient id="music" x2="0" y2="1"><stop stop-color="#ee6878" /><stop offset="1" stop-color="#e63a44" /></linearGradient>
      <linearGradient id="store" x2="0" y2="1"><stop stop-color="#4eb4ee" /><stop offset="1" stop-color="#2460d6" /></linearGradient>
      <linearGradient id="discord" x2="0" y2="1"><stop stop-color="#7482f2" /><stop offset="1" stop-color="#5462ee" /></linearGradient>
      <linearGradient id="ki" x2="0" y2="1"><stop stop-color="#2649c8" /><stop offset="1" stop-color="#2a2ea6" /></linearGradient>
    </defs>
  </svg>

  <header class="menubar">
    <svg class="apple" viewBox="0 0 26 32"><path d="M18 8.500c2.600 0 4.800 1.200 6 3-4.600 3-4 9.400.9 11.400C23.400 27 20.900 31 18.200 31c-1.900 0-2.700-1.100-4.700-1.100S10.600 31 8.900 31C5 31 1 23.500 1 17.600 1 12 4.500 8.600 8.200 8.600c2.200 0 3.800 1.400 5.200 1.400s2.900-1.500 4.600-1.500zM18.400 1c.3 3.300-2.600 6.700-5.700 6.500C12.300 4.200 15.400 1.200 18.400 1z" fill="#000" /></svg>
    <nav>
      {#each menus as [m, w], i}<span class:app={i === 0} style:width="{w}px">{m}</span>{/each}
    </nav>
    <div class="status-icons">
      <svg class="bt" viewBox="0 0 18 30"><path d="M1 9l15 12-7 7V2l7 7L1 21" fill="none" stroke="#222" stroke-width="2.200" /></svg>
      <svg class="play" viewBox="0 0 30 30"><circle cx="15" cy="15" r="13" fill="none" stroke="#222" stroke-width="2.600" /><path d="M11.500 9l10 6-10 6z" fill="#222" /></svg>
      <span class="kbd">A</span>
      <svg class="pods" viewBox="0 0 38 28"><circle cx="5" cy="10" r="4.500" fill="#999" /><circle cx="33" cy="10" r="4.500" fill="#999" /><path d="M7 3q6-3 10 1 2 5-3 9v14H10V14Q5 9 7 3zM31 3q-6-3-10 1-2 5 3 9v14h4V14q5-5 3-11z" fill="#222" /></svg>
      <svg class="batt" viewBox="0 0 52 26"><rect x="1" y="1.500" width="44" height="23" rx="6.500" fill="none" stroke="#8d8d8a" stroke-width="2" /><rect x="4" y="4.500" width="38" height="17" rx="4" fill="#222" /><path d="M48 9q4 4 0 8z" fill="#8d8d8a" /><path d="M27 0L14 15h8l-4 12 14-16h-8z" fill="#222" stroke="#e5e4de" stroke-width="2" /></svg>
      <svg class="wifi" viewBox="0 0 34 26"><path d="M2 8.500Q17-5 32 8.500M7.500 14.500q9.500-8 19 0" fill="none" stroke="#222" stroke-width="4" /><path d="M11.500 18.500q5.500-4.500 11 0L17 25z" fill="#222" /></svg>
      <svg class="srch" viewBox="0 0 26 26"><circle cx="10.500" cy="10.500" r="8.800" fill="none" stroke="#222" stroke-width="2.600" /><path d="M17 17l7.500 8" stroke="#222" stroke-width="3" /></svg>
      <svg class="cc" viewBox="0 0 28 28"><rect x="1.500" y="1.500" width="25" height="10.500" rx="5.200" fill="none" stroke="#222" stroke-width="2.600" /><circle cx="7" cy="6.700" r="4" fill="#222" /><rect y="15" width="28" height="13" rx="6.500" fill="#222" /><circle cx="21" cy="21.500" r="3.500" fill="#e5e4de" /></svg>
      <span class="date">Tue Mar 5</span><span class="clock">1:23</span>
    </div>
  </header>

  <section class="window">
    <div class="title"><div class="lights"><i class="r"></i><i class="y"></i><i class="g"></i></div><h1>*Sensor PCB — PCB Editor</h1></div>

    <div class="bar first">
      {@render tools(topBar)}
      <div class="combo"><i></i>F.Cu (PgUp)</div>
      <button class="drop" aria-label="layers"><svg viewBox="0 0 40 40"><path d="M14 17l6 7 6-7" fill="none" stroke="#222" stroke-width="3.200" /></svg></button>
      {@render tools(['pair', '|', 'sch', '|', 'term'])}
    </div>

    <div class="bar second">
      <div class="select w1">Track: use netclass width{@render knob()}</div>
      {@render tools(['auto', '|'])}
      <div class="select w2">Via: use netclass sizes{@render knob()}</div>
      <i class="sep"></i>
      <div class="select w3">Grid: 0.2000 mm (0.0079 in){@render knob()}</div>
      <i class="sep"></i>
      <div class="select w4">Zoom 2.20{@render knob()}</div>
    </div>

    <main>
      <aside class="rail left">{@render tools(leftBar)}</aside>

      <div class="canvas">
        <svg class="pcb" viewBox="70 244 2845 1563" width="2845" height="1563">
          <defs>
            <pattern id="dots" patternUnits="userSpaceOnUse" x="1111.300" y="541.200" width="27.320" height="27.320"><rect width="1.200" height="1.200" fill="#4a5663" /></pattern>
            <pattern id="rowdots" patternUnits="userSpaceOnUse" x="1111.300" y="541" width="27.320" height="273.200"><rect width="1.300" height="1.800" fill="#6b757f" /></pattern>
            <pattern id="coldots" patternUnits="userSpaceOnUse" x="1111.200" y="541.200" width="273.200" height="27.320"><rect width="1.800" height="1.300" fill="#6b757f" /></pattern>
            <pattern id="major" patternUnits="userSpaceOnUse" x="1110.800" y="540.700" width="273.200" height="273.200"><rect width="2.400" height="2.400" fill="#a0a6aa" /></pattern>
            <pattern id="hr" patternUnits="userSpaceOnUse" width="20" height="20"><path d="M0 0l20 20" stroke="#a34a63" stroke-width="1.100" /></pattern>
            <pattern id="hb" patternUnits="userSpaceOnUse" width="20" height="20"><path d="M20 0L0 20" stroke="#33619c" stroke-width="1.100" /></pattern>
            <pattern id="edge" patternUnits="userSpaceOnUse" width="6" height="6"><path d="M0 0l6 6" stroke="#a03444" stroke-width="1" /></pattern>
          </defs>
          {#each ['dots', 'rowdots', 'coldots', 'major'] as p}<rect x="70" y="244" width="2845" height="1563" fill="url(#{p})" />{/each}
          <path d="M2029.500 861.500h159M2109 782v159" stroke="#8d9298" stroke-width="1.200" />

          <g transform="translate(1060 450)">
            <rect x="23.500" y="102.500" width="763.500" height="876.500" rx="50" fill="none" stroke="#c0c3c0" stroke-width="1.200" />
            <rect x="126.500" y="107" width="559" height="867" fill="#8a4055" stroke="#7c2730" stroke-width="2.500" />
            <rect x="129" y="110" width="554" height="861" fill="none" stroke="url(#edge)" stroke-width="6" />
            {#each bluePolys as p}<polygon points={p} fill="#2d5488" />{/each}
            {#each redPolys as p}<polygon points={p} fill="#8a4055" />{/each}
            <polygon points={pts('735,1240 600,1240 600,1490 735,1490')} fill="#001021" opacity=".75" />
            {#each blueBands as [p, w]}<polyline points={p} class="band" stroke="#2d5488" stroke-width={w} />{/each}
            {#each darkRed as [p, w]}<polyline points={p} class="band" stroke="#78252c" stroke-width={w} />{/each}
            {#each dark as [p, w]}<polyline points={p} class="band" stroke="#001021" stroke-width={w} />{/each}

            {#each holes as [u, v]}
              <g transform="translate({X(u)} {Y(v)})" fill="none">
                <circle r="46.500" stroke="#d62cd8" stroke-width="1.200" fill="#001021" /><circle r="44.500" stroke="#5b8fd8" stroke-width="2.300" />
                <circle r="24.500" stroke="#1cc4d6" stroke-width=".9" /><circle r="22.300" fill="#1cc4d6" />
              </g>
            {/each}

            {#each mauveTraces as p}<polyline points={p} class="trace" stroke="#9c5270" stroke-width="3" />{/each}
            {#each blueTraces as p}<polyline points={p} class="trace" stroke="#4d7fc4" stroke-width="3" />{/each}
            {#each redTraces as p}<polyline points={p} class="trace" stroke="#c83434" stroke-width="3" />{/each}

            <!-- antenna keep-out and radio module -->
            <rect x="297" y="22" width="245.500" height="81" fill="url(#hr)" /><rect x="297" y="22" width="245.500" height="81" fill="url(#hb)" />
            <rect x="297" y="22" width="245.500" height="81" fill="none" stroke="#f0dca8" stroke-width="1.600" />
            <path d="M297 103h245.500" stroke="#c9bcbc" stroke-width="2.500" />
            <rect x="287" y="18.500" width="265.500" height="362" fill="none" stroke="#e62ce0" stroke-width="1.300" />
            <path d="M297 350v20h20M541 350v20h-20" fill="none" stroke="#f1eca8" stroke-width="2" />
            <text x="313.500" y="74" font-size="20" textLength="89" class="fab">ANTENNA</text>
            {#each modPads as [u, v]}<rect x={X(u) - 11.500} y={Y(v) - 7} width="23" height="14" class="mpad" />{/each}
            {#each footPads as [u, v]}<rect x={X(u) - 6.500} y={Y(v) - 11} width="13" height="22" class="mpad" />{/each}
            <path d="M409 196h22M420 185v22" stroke="#b0407a" stroke-width="1.500" />
            <rect x="372" y="202" width="54" height="55" fill="#c83434" opacity=".8" />
            {#each thermals as [u, v]}<path transform="translate({X(u)} {Y(v)})" d="M-4-6L14 4 8 6 11 18 3 12z" fill="#dc5266" stroke="#6b1c34" stroke-width="1" />{/each}
            {#each thermalVias as [u, v]}<circle cx={X(u)} cy={Y(v)} r="2.600" fill="#d8a02c" stroke="#802030" />{/each}

            <!-- regulator, power jack and its slots -->
            <rect x="128" y="164" width="95.500" height="118" class="yard" />
            <rect x="152" y="166.500" width="48" height="29.500" rx="13" fill="#c83434" stroke="#8a5ac8" stroke-width="1" />
            <rect x="131.500" y="198.500" width="89" height="48" fill="none" stroke="#cf8460" stroke-width="1.800" />
            {#each [284, 346, 406] as u}<rect x={X(u) - 7.500} y="248" width="15" height="29" rx="3" class="mpad" />{/each}
            <path d="M123.500 368h33v-8h62v8h35v19h19v70h-19v114h-130z" class="yard" />
            <path d="M126.500 371h124v197h-124z" fill="none" stroke="#d9955f" stroke-width="1.800" />
            {#each [[372, 1140, 70, 39, 48, 15], [495, 1263, 34, 66, 15, 41], [370, 1387, 64, 34, 41, 15]] as [u, v, w, h, iw, ih]}
              <rect x={X(u) - w / 2 - 4.500} y={Y(v) - h / 2 - 4.500} width={w + 9} height={h + 9} rx="21" fill={v > 1300 ? '#6d2a24' : '#001021'} />
              <rect x={X(u) - w / 2} y={Y(v) - h / 2} width={w} height={h} rx="17.500" fill="#e3b52e" stroke="#a06aa0" stroke-width="1.300" />
              <rect x={X(u) - iw / 2} y={Y(v) - ih / 2} width={iw} height={ih} rx="7.500" fill="#001021" />
            {/each}
            <rect x="244" y="328.500" width="34" height="28" fill="#6b2b40" stroke="#2fd0dc" stroke-width="1.200" />
            <path d="M246 331h11v9h-11zM264 331h11v9h-11zM246 345h11v9h-11zM264 345h11v9h-11zM251 333h20v18h-20zM261 329v27" fill="#85505e" stroke="#c0506a" stroke-width="1.200" />

            <!-- QFN bridge chip -->
            <rect x="364" y="415.500" width="85" height="94" class="yard" />
            <path d="M373 432v-8h8M441 432v-8h-8M373 484v8h8M441 484v8h-8" fill="none" stroke="#f1eca8" stroke-width="2" />
            {#each range(7) as i}
              <path d="M{387 + i * 6.500} 418v14M{387 + i * 6.500} 482v17M367 {437 + i * 6.500}h16M432 {437 + i * 6.500}h16" stroke="#8a5ac8" stroke-width="5" /><path d="M{387 + i * 6.500} 419v14M{387 + i * 6.500} 482v16M368 {437 + i * 6.500}h16M432 {437 + i * 6.500}h16" stroke="#c83434" stroke-width="4" />
            {/each}
            <rect x="378" y="431" width="58" height="53" fill="#c83434" />
            <text x="407" y="453" font-size="20" text-anchor="middle" class="lbl">29</text><text x="407" y="474.500" font-size="14" textLength="27" lengthAdjust="spacingAndGlyphs" text-anchor="middle" class="lbl">GND</text>

            {#each hParts as [u, v]}
              <g transform="translate({X(u)} {Y(v)})">
                <rect x="-25.500" y="-13.500" width="51" height="27" class="yard" />
                <path d="M-4-11.500h8M-4 11.500h8" stroke="#f1eca8" stroke-width="2" />
                <path d="M0-11v22M-3-9v18M3-9v18" stroke="#9a7ac8" stroke-width="1" />
                <rect x="-23.500" y="-11" width="19" height="22" rx="5.500" class="ring" /><rect x="4.500" y="-11" width="19" height="22" rx="5.500" class="ring" />
                <rect x="-22" y="-9.500" width="16.500" height="19" rx="4.500" class="pad" /><rect x="5.500" y="-9.500" width="16.500" height="19" rx="4.500" class="pad" />
              </g>
            {/each}
            {#each vParts as [u, v]}
              <g transform="translate({X(u)} {Y(v)})">
                <rect x="-13.500" y="-25.500" width="27" height="51" class="yard" />
                <path d="M-11.500-4v8M11.500-4v8" stroke="#f1eca8" stroke-width="2" />
                <path d="M-10 0h20M-8-3h16M-8 3h16" stroke="#9a7ac8" stroke-width="1" />
                <rect x="-11" y="-24" width="22" height="19" rx="5.500" class="ring" /><rect x="-11" y="5" width="22" height="19" rx="5.500" class="ring" />
                <rect x="-9.500" y="-22.500" width="19" height="16.500" rx="4.500" class="pad" /><rect x="-9.500" y="6" width="19" height="16.500" rx="4.500" class="pad" />
              </g>
            {/each}

            <!-- SOT-23 transistors -->
            {#each [[1, 325, 0], [-1, 514, 0]] as [d, x]}
              <g transform="translate({x} 653) scale({d} 1)">
                <path d="M-19-24H9v4H22v40H9v4H-19V7H-31V-7h12z" class="yard" /><path d="M-16-7v-15H6M-16 7v15H6M6-17v34" fill="none" stroke="#f1eca8" stroke-width="2" /><path d="M-6-18h10v36h-10z" fill="none" stroke="#bdb4b4" stroke-width="1.200" />
                <path d="M0-18h18v10H0zM0 8h18v10H0zM-28-5h20V5h-20z" class="pad" /><path d="M-2-20h22v14H-2zM-2 6h22v14H-2z" class="ring" />
              </g>
            {/each}

            <!-- tactile switches -->
            {#each [320.500, 521.500] as x}
              <g transform="translate({x} 739)">
                <rect x="-53.500" y="-36" width="107" height="71" fill="none" stroke="#b86a70" stroke-width="1.300" />
                <path d="M-28-23h56M-28 21h56M-30-10v17M30-10v17" stroke="#e6b49a" stroke-width="2" /><path d="M-11 0h22M0-11v22" stroke="#a8447c" stroke-width="1.500" />
              </g>
            {/each}
            <path d="M349.500 848.500h69v30h-69zM423.500 848.500h69v30h-69z" class="yard" />
            <path d="M363 852h40M363 876h40M437 852h40M437 876h40" stroke="#ead6a0" stroke-width="1.600" /><path d="M375 863.500h20M384 853v21M449 863.500h20M458 853v21" stroke="#a04a9a" stroke-width="1.300" />
            {#each squarePads as [u, v]}<rect x={X(u) - 8.500} y={Y(v) - 7.500} width="17" height="15" class="mpad" />{/each}

            <!-- USB connectors -->
            {#each usb as u0}
              <g transform="translate({X(u0)} 885.500)">
                {#each [37, 59, 81] as x}
                  <rect x={x - 8} y="-34" width="16" height="31" class="yard" /><rect x={x - 4} y="-32" width="8" height="9" class="pad" /><rect x={x - 4} y="-13" width="8" height="9" class="pad" />
                  <path d="M{x - 7}-22v8M{x + 7}-22v8M{x - 5}-18h10" stroke="#f1eca8" stroke-width="1.600" /><rect x={x - 2} y="-41" width="4" height="4" fill="#cf8460" />
                {/each}
                <rect width="118" height="91" class="yard" />
                <path d="M8 28v55M112 28v55" stroke="#cf8460" stroke-width="1.500" /><path d="M8 69h148M8 78h104M16 86h90M10 78q-4 8 0 9M108 78q4 8 0 9" fill="none" stroke="#c06a66" stroke-width="1.800" />
                <rect x="4" y="4" width="24" height="22" class="pad" /><rect x="92" y="4" width="24" height="22" class="pad" />
                {#each range(5) as i}<rect x={39 + i * 9} y="1" width="6.500" height="23" class="mpad" />{/each}
                <rect x="30" y="35" width="28" height="28" class="pad" /><rect x="62" y="35" width="28" height="28" class="pad" /><path d="M29 34h30v30h-30zM61 34h30v30h-30z" class="ring" />
                {#each [14, 105] as x}<rect x={x - 12} y="32" width="24" height="34" rx="12" fill="#6d2a24" /><rect x={x - 7.500} y="36" width="15" height="27" rx="7.500" fill="#001021" stroke="#e3b52e" stroke-width="3" />{/each}
                <text x="111" y="68" font-size="7" textLength="29" class="end">PCB END</text>
              </g>
            {/each}

            <text transform="translate(293 615) rotate(-90)" font-size="19" textLength="37" class="silk">R11</text>
            <text x="307" y="699" font-size="19" textLength="34" class="silk o">S2°</text><text x="409" y="696.500" font-size="19" textLength="24" class="silk o">R9</text><text x="508.500" y="700.500" font-size="19" textLength="24" class="silk">S1</text>
            <text transform="translate(392 819) rotate(-90)" font-size="19" textLength="25" class="silk o">C7</text><text transform="translate(513 819) rotate(-90)" font-size="19" textLength="25" class="silk o">C6</text>

            {#each vias as [u, v]}<circle cx={X(u)} cy={Y(v)} r="4.200" fill="#e0b032" stroke="#f3efe6" stroke-width="2.200" />{/each}
            {#each arrows as [u, v]}<path transform="translate({X(u)} {Y(v)})" d="M0 0L15 7 10.500 9.500 20 16 12 20 8 11.500 5 14z" fill="#f8b13a" stroke="#7a4a22" stroke-width=".8" />{/each}
            {#each [[583, 310], [1064, 310]] as [u, v]}<path transform="translate({X(u)} {Y(v)})" d="M0 0L14 5 10 8 20 19 13 19 8 11 4 13z" fill="#fde6ea" stroke="#6a3344" stroke-width=".6" />{/each}
          </g>
        </svg>
      </div>

      <aside class="rail right">{@render tools(rightBar)}<i class="grip side"></i></aside>

      <aside class="panel">
        <h2>Appearance</h2>
        <div class="tabs"><b>Layers</b><span>Objects</span><i></i><span class="nets">Nets</span></div>
        <div class="group">
          <div class="list">
            <ul>
              {#each layers as [name, color], i}
                <li class:sel={i === 0}>
                  <svg class="tri" viewBox="0 0 6 10">{#if i === 0}<path d="M0 0l6 5-6 5z" fill="#4657f5" />{/if}</svg>
                  <i style:background={color}></i>
                  <svg class="eye" viewBox="0 0 32 32"><circle cx="16" cy="16" r="16" fill="#585858" /><path d="M3 16q13-13.500 26 0-13 13.500-26 0z" fill="#f2f2f2" /><circle cx="16" cy="16" r="4.200" fill="#e6e6e6" stroke="#8f8f8f" stroke-width="2" /></svg>
                  {name}
                </li>
              {/each}
            </ul>
            <div class="scroll"><i></i></div>
          </div>
          <div class="opts"><svg viewBox="0 0 10 18"><path d="M0 0l10 9-10 9z" fill="#1c1c1c" /></svg>Layer Display Options</div>
        </div>
        <div class="cap">Presets (Ctrl+Tab):</div>
        <div class="select full">All Layers{@render knob()}</div>
        <div class="cap second-cap">Viewports (Option+Tab):</div>
        <div class="select full"><hr />{@render knob()}</div>
        <i class="grip"></i>
        <h2 class="filter-title">Selection Filter</h2>
        <div class="filters">
          {#each filters as [a, b], i}
            <span>{@render check(true)}{a}</span><span>{@render check(i > 0)}{b}</span>
          {/each}
        </div>
      </aside>
    </main>

    <div class="counts">{#each counts as [k, n, w]}<div style:width="{w}px"><span>{k}</span><span>{n}</span></div>{/each}</div>
    <footer><span class="s1">Z 1.91</span><span class="s2">X 173.0000&nbsp; Y 83.4000</span><span class="s3">dx 173.0000&nbsp; dy 83.4000&nbsp; dist 192.0535</span><span class="s4">grid X 0.2000&nbsp; Y 0.2000</span><span class="s5">mm</span><span>Select item(s)</span></footer>
  </section>

  <div class="dock">
    {#each dock as d}
      <div class="app-icon" class:run={d.run}>
        <svg viewBox="0 0 100 100" role="img" aria-label={d.n}>{@html d.s}</svg>
        {#if d.badge}<em>{d.badge}</em>{/if}
        {#if d.desk}<em class="desk"><svg viewBox="0 0 46 46"><rect x="8" y="11" width="30" height="22" rx="2" fill="#c4c4c4" stroke="#1c1c1c" stroke-width="2.500" /><path d="M20 34h6l2 4H18z" fill="#1c1c1c" /></svg></em>{/if}
      </div>
    {/each}
    <i class="divider"></i>
    <svg class="trash" viewBox="0 0 100 120"><path d="M14 16l10-8 8-8 10 8 10-6 10 8 14-4 10 12-6 14H20z" fill="#e4e4e2" /><path d="M20 14l12 8 12-10 10 12 14-8 8 10H22z" fill="#70757a" /><path d="M42 10l10 4-6 8z" fill="#4fae7a" /><path d="M60 12l8 10-10 2z" fill="#c8502e" /><path d="M7 16q43 18 86 0L83 106q-2 10-33 10t-33-10z" fill="#dededc" opacity=".94" /><path d="M26 40l6 66M50 44v66M74 40l-6 66" stroke="#d2d2d1" stroke-width="5" opacity=".5" /><ellipse cx="50" cy="15" rx="43" ry="11" fill="none" stroke="#c6c8c8" stroke-width="3" /></svg>
  </div>
</div>

<style>
  :global(body) { margin: 0; background: #0c0b08; }
  * { box-sizing: border-box; }
  .screen { width: 3360px; height: 2100px; overflow: hidden; display: flex; flex-direction: column; font-family: Inter, "Liberation Sans", sans-serif; color: #222;
    background: radial-gradient(ellipse 260px 40px at 400px 2100px, #3d3714, transparent), radial-gradient(ellipse 420px 50px at 1500px 2100px, #54491c, transparent), radial-gradient(ellipse 300px 40px at 1850px 1935px, #6b5c1e, transparent), radial-gradient(ellipse 420px 40px at 2500px 1935px, #2e3a14, transparent), radial-gradient(ellipse 500px 50px at 2600px 2100px, #2b3414, transparent), radial-gradient(ellipse 90px 140px at 3320px 2010px, #2e260d, transparent), radial-gradient(ellipse 110px 60px at 50px 2085px, #2c2a10, transparent), radial-gradient(ellipse 80px 40px at 60px 2020px, #221a0c, transparent), #0a0a07; }
  .defs { width: 0; height: 0; position: absolute; }
  button { border: 0; background: none; padding: 0; font: inherit; }
  svg { display: block; flex: none; font-family: Inter, sans-serif; }

  .menubar { height: 48px; flex: none; display: flex; align-items: center; background: linear-gradient(90deg, #f1f0ea, #eae9e3 45%, #e2e1db); font-size: 25.500px; color: #000; padding-bottom: 4px; }
  .apple { width: 26px; height: 32px; margin: 0 42px 0 41px; }
  nav { display: flex; letter-spacing: -.2px; }
  nav span { flex: none; }
  .app { font-weight: 700; }
  .status-icons { margin-left: auto; padding-right: 37px; display: flex; align-items: center; white-space: nowrap; }
  .bt { width: 18px; height: 30px; margin-right: 42px; }
  .play { width: 30px; height: 30px; margin-right: 40px; }
  .kbd { width: 43px; height: 32px; border-radius: 6px; background: #222; color: #e8e7e1; font-size: 24px; font-weight: 600; line-height: 32px; text-align: center; margin-right: 40px; }
  .pods { width: 38px; height: 28px; margin-right: 36px; }
  .batt { width: 52px; height: 26px; margin-right: 37px; }
  .wifi { width: 34px; height: 26px; margin-right: 41px; }
  .srch { width: 26px; height: 26px; margin-right: 39px; }
  .cc { width: 28px; height: 28px; margin-right: 36px; }
  .date { margin-right: 19px; letter-spacing: .2px; }

  .window { height: 1882px; flex: none; display: flex; flex-direction: column; overflow: hidden; background: #ececec; border-top: 1px solid #85847f; border-radius: 20px 20px 22px 22px; }
  .title { height: 57px; flex: none; display: flex; align-items: center; background: #f0f0ee; border-bottom: 2px solid #cbcbca; }
  .lights { display: flex; gap: 16px; padding-left: 16px; width: 400px; }
  .lights i { width: 24px; height: 24px; border-radius: 50%; border: 1px solid #0002; }
  .r { background: #ed6a5e; } .y { background: #f5bf4f; } .g { background: #61c554; }
  h1 { margin: 0 400px 0 0; flex: 1; text-align: center; font-size: 26px; font-weight: 700; color: #454545; letter-spacing: .1px; line-height: 30px; }

  .bar { flex: none; display: flex; align-items: center; gap: 4px; }
  .first { height: 67px; padding-left: 10px; }
  .second { height: 69px; padding-left: 11px; }
  .sep { flex: none; width: 2px; height: 44px; margin: 0 6px; background: #c4c4c4; }
  .tool { width: 60px; height: 60px; flex: none; border: 2px solid transparent; display: flex; align-items: center; justify-content: center; }
  .tool svg { width: 48px; height: 48px; }
  .tool.on { background: #e6f0ff; border-color: #b5d5fb; }
  .more { position: relative; }
  .more::after { content: ''; position: absolute; right: -2px; bottom: -1px; border-left: 14px solid transparent; border-bottom: 14px solid #1c1c1c; }
  .combo { width: 303px; height: 44px; margin-left: 0; border: 2px solid #7d7d7d; background: #fff; display: flex; align-items: center; gap: 12px; padding-left: 8px; font-size: 25px; }
  .combo i { width: 28px; height: 28px; background: #b93f3a; border: 2px solid #111; }
  .drop { width: 40px; height: 40px; margin: 0 3px 0 4px; border-radius: 10px; background: #fff; box-shadow: 0 1px 2px #0005; }
  .select { position: relative; height: 42px; border-radius: 10px; background: #fff; box-shadow: 0 1px 2px #0005; display: flex; align-items: center; justify-content: space-between; padding: 0 4px 0 15px; font-size: 25.400px; white-space: nowrap; }
  .knob { width: 32px; height: 32px; }
  .w1 { width: 369px; } .w2 { width: 358px; margin-left: 0; } .w3 { width: 468px; } .w4 { width: 228px; }

  main { display: flex; height: 1567px; flex: none; }
  .rail { display: flex; flex-direction: column; align-items: center; gap: 4px; padding-top: 10px; }
  .rail .sep { width: 44px; height: 2px; margin: 6px 0; background: #bdbdbd; }
  .left { width: 68px; padding-right: 2px; }
  .right { width: 83px; padding-right: 15px; position: relative; }
  .canvas { width: 2849px; height: 1567px; background: #001021; border: 2px solid #b0adab; border-bottom-color: #a8a8a8; overflow: hidden; }
  .band { fill: none; stroke-linecap: round; stroke-linejoin: round; }
  .trace { fill: none; stroke-linecap: round; stroke-linejoin: round; }
  .yard { fill: none; stroke: #e02cb4; stroke-width: 1.200; }
  .pad { fill: #c83434; }
  .ring { fill: none; stroke: #b0304c; stroke-width: 1; }
  .mpad { fill: #c83434; stroke: #8a5ac8; stroke-width: 1.400; }
  .fab, .lbl, .silk, .end { font-family: "DejaVu Sans Mono", monospace; }
  .fab { fill: #b4b4b4; } .lbl { fill: #f4dede; } .silk { fill: #f1eca8; } .silk.o { fill: #d07f62; } .end { fill: #c06a66; }

  .grip { width: 12px; height: 12px; border-radius: 50%; background: #d2d2d2; align-self: center; }
  .side { position: absolute; right: 1px; top: 778px; }
  .panel { width: 360px; border-left: 1px solid #cfcfcf; display: flex; flex-direction: column; overflow: hidden; font-size: 23.300px; white-space: nowrap; }
  h2 { margin: 0; height: 34px; flex: none; background: #c3c3c3; font-size: 21.500px; font-weight: 400; line-height: 33px; padding-left: 6px; letter-spacing: .2px; }
  .tabs { flex: none; width: 341px; height: 44px; margin: 25px 0 0 10px; border-radius: 11px; background: #e0e0e0; border: 1px solid #d8d8d8; display: flex; align-items: center; z-index: 1; font-size: 22px; line-height: 38px; padding-bottom: 1px; }
  .tabs b { width: 115px; height: 40px; border-radius: 10px; background: #fff; box-shadow: 0 1px 3px #0005; font-weight: 400; text-align: center; padding-left: 2px; }
  .tabs span { padding-left: 23px; }
  .tabs i { width: 2px; height: 24px; background: #c8c8c8; margin-left: 22px; }
  .tabs .nets { padding-left: 22px; }
  .group { height: 1056px; flex: none; margin-top: -24px; padding: 36px 0 0 5px; border: 1px solid #dadada; border-left: 0; border-radius: 14px; background: #e6e6e6; }
  .list { height: 970px; overflow: hidden; display: flex; background: #e9e9e9; }
  ul { list-style: none; margin: 0; padding: 0; width: 318px; }
  li { height: 36px; display: flex; align-items: center; font-size: 23px; line-height: 36px; }
  li.sel { background: #f8f8f8; }
  li i { width: 32px; height: 24px; margin: 0 12px 0 12px; }
  .tri { width: 6px; height: 10px; margin-left: 6px; }
  .eye { width: 32px; height: 32px; margin-right: 11px; }
  .scroll { width: 26px; margin-left: 2px; background: #fafafa; padding: 6px 4px 0 6px; }
  .scroll i { display: block; width: 16px; height: 868px; border-radius: 8px; background: #7d7d7d; }
  .opts { display: flex; align-items: center; gap: 5px; padding-left: 23px; height: 48px; font-size: 23.800px; }
  .opts svg { width: 10px; height: 18px; }
  .cap { height: 32px; line-height: 30px; padding-left: 13px; }
  .second-cap { margin-top: 8px; height: 34px; line-height: 32px; font-size: 23.700px; }
  .full { width: 332px; height: 40px; flex: none; margin: 0 0 0 13px; font-size: 24.500px; padding-bottom: 1px; }
  .cap + .full { margin-top: 1px; }
  hr { width: 274px; margin: 2px 0 0; border: 0; border-top: 2px solid #d6d6d6; }
  .panel .grip { flex: none; margin: 18px 0 0; }
  .filter-title { margin-top: 1px; letter-spacing: .3px; }
  .filters { display: grid; grid-template-columns: 200px 260px; grid-auto-rows: 32.200px; padding: 9px 0 0 9px; }
  .filters span { display: flex; align-items: center; gap: 12px; font-size: 23.500px; line-height: 30px; }
  .check { width: 28px; height: 28px; }

  .counts { height: 67px; flex: none; display: flex; padding: 5px 0 0 22px; font-size: 22px; letter-spacing: -.1px; border-bottom: 1px solid #c2c2c2; }
  .counts div { display: flex; flex-direction: column; line-height: 32px; }
  footer { height: 55px; flex: none; display: flex; align-items: center; padding: 0 0 3px 1363px; background: linear-gradient(#e9e9e9, #d4d4d4 45%, #bfbfbf); font-size: 22.100px; color: #3c3c3c; white-space: nowrap; }
  .s1 { width: 143px; } .s2 { width: 313px; } .s3 { width: 503px; } .s4 { width: 362px; } .s5 { width: 110px; }

  .dock { flex: none; width: 3131px; height: 154px; margin: 6px 0 0 114px; padding-left: 20px; border-radius: 46px; border: 2px solid #8d8b7c; display: flex; align-items: flex-start; gap: 32.950px;
    background: linear-gradient(90deg, #5f6157, #6b675a 10%, #5e6257 18%, #66675a 28%, #6c6a58 33%, #8f8056 39%, #6b6b59 45%, #696b58 50%, #a29055 56%, #7a7156 62%, #6a6758 68%, #8d7b5d 74%, #727753 80%, #6d7454 88%, #5d6154); }
  .app-icon { position: relative; width: 100px; height: 100px; margin-top: 20px; flex: none; }
  .app-icon svg { width: 100px; height: 100px; overflow: visible; filter: drop-shadow(0 2px 2px #0006); }
  .run::after { content: ''; position: absolute; left: 46px; top: 120px; width: 8px; height: 8px; border-radius: 50%; background: #0a0a0a; }
  em { position: absolute; right: -14px; top: -12px; width: 47px; height: 47px; border-radius: 50%; background: #e5503f; color: #fff; font: 400 25px/47px Inter, sans-serif; text-align: center; box-shadow: 0 1px 3px #0006; }
  .desk { background: #dcdcda; }
  .app-icon .desk svg { width: 47px; height: 47px; filter: none; }
  .divider { width: 2px; height: 114px; margin: 18px 10px 0 15px; background: #3f4038; flex: none; }
  .trash { width: 100px; height: 120px; margin-top: 10px; }
</style>
